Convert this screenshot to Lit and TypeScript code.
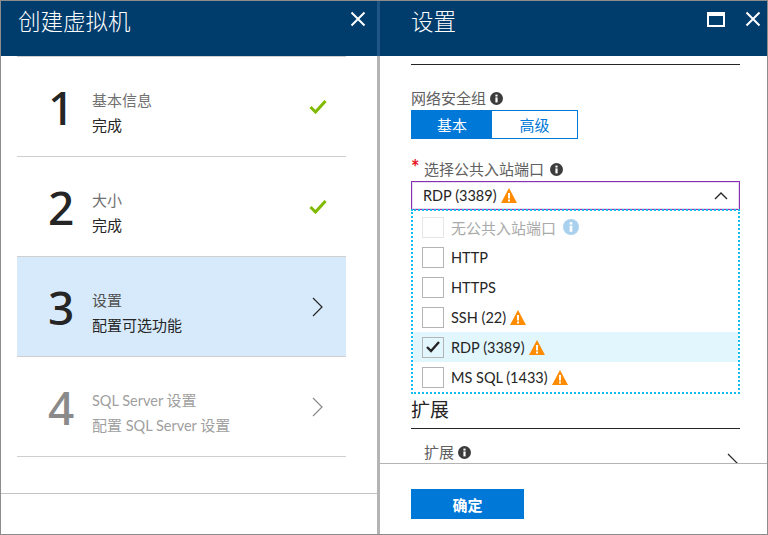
import { LitElement, html, css, svg } from "lit";
import { customElement } from "lit/decorators.js";
import { classMap } from "lit/directives/class-map.js";

interface Step {
  num: number;
  title: string;
  sub: string;
  icon: "check" | "chevron";
  active?: boolean;
  disabled?: boolean;
}

interface Port {
  label: string;
  warn?: boolean;
  checked?: boolean;
  disabled?: boolean;
}

const steps: Step[] = [
  { num: 1, title: "基本信息", sub: "完成", icon: "check" },
  { num: 2, title: "大小", sub: "完成", icon: "check" },
  { num: 3, title: "设置", sub: "配置可选功能", icon: "chevron", active: true },
  { num: 4, title: "SQL Server 设置", sub: "配置 SQL Server 设置", icon: "chevron", disabled: true },
];

const ports: Port[] = [
  { label: "无公共入站端口", disabled: true },
  { label: "HTTP" },
  { label: "HTTPS" },
  { label: "SSH (22)", warn: true },
  { label: "RDP (3389)", warn: true, checked: true },
  { label: "MS SQL (1433)", warn: true },
];

// the CJK runs are set a little larger than the latin ones
const mixed = (text: string) =>
  text
    .split(/([\u4e00-\u9fff]+)/)
    .map((part, i) => (i % 2 ? html`<span class="cjk">${part}</span>` : part));

const closeIcon = html`<svg width="16" height="16" viewBox="0 0 16 16">
  <path d="M1.5 1.5L14.5 14.5M14.5 1.5L1.5 14.5" stroke="#fff" stroke-width="2" fill="none" />
</svg>`;

const infoIcon = (color = "#3c3c3c", size = 13) => html`<svg width=${size} height=${size} viewBox="0 0 13 13">
  <circle cx="6.5" cy="6.5" r="6.5" fill=${color} />
  <rect x="5.4" y="5.4" width="2.2" height="5" fill="#fff" />
  <rect x="5.4" y="2.6" width="2.2" height="1.9" fill="#fff" />
</svg>`;

const warnIcon = svg`<svg width="16" height="15" viewBox="0 0 16 15">
  <path d="M8 0L16 15H0Z" fill="#ff8c00" />
  <rect x="7" y="5" width="2" height="5.5" fill="#fff" />
  <rect x="7" y="11.5" width="2" height="2" fill="#fff" />
</svg>`;

const checkIcon = html`<svg class="tick" width="18" height="15" viewBox="0 0 18 15">
  <path d="M1.5 8L6.5 13L16.5 2" stroke="#7fba00" stroke-width="3" fill="none" />
</svg>`;

const chevron = (color: string) => html`<svg class="chevron" width="11" height="20" viewBox="0 0 11 20">
  <path d="M1 1L10 10L1 19" stroke=${color} stroke-width="1.2" fill="none" />
</svg>`;

@customElement("app-root")
export class AppRoot extends LitElement {
  static styles = css`
    :host {
      display: grid;
      grid-template-columns: 380px 388px;
      width: 768px;
      height: 535px;
      overflow: hidden;
      background: #fff;
      box-sizing: border-box;
      font-family: "Lato", "Noto Sans CJK SC", sans-serif;
      font-size: 14.5px;
      color: #252525;
    }
    * {
      box-sizing: border-box;
    }
    .cjk {
      font-family: "Noto Sans CJK SC", sans-serif;
      font-size: 15px;
    }
    .blade {
      display: flex;
      flex-direction: column;
      height: 535px;
      border-top: 1px solid #8c8c8c;
      border-bottom: 1px solid #8c8c8c;
      min-width: 0;
    }
    .blade.left {
      border-left: 1px solid #8c8c8c;
    }
    .blade.right {
      border-right: 1px solid #8c8c8c;
    }
    .head {
      flex: none;
      height: 55px;
      background: #003c6c;
      color: #fff;
      display: flex;
      align-items: flex-start;
      justify-content: space-between;
    }
    .left .head {
      padding: 4px 11px 0 17px;
      border-right: 3px solid #1f5585;
    }
    .right .head {
      padding: 4px 6px 0 31px;
    }
    .head h1 {
      margin: 0;
      font-family: "Noto Sans CJK SC", sans-serif;
      font-size: 22.5px;
      font-weight: 300;
      line-height: 30px;
    }
    .head .actions {
      display: flex;
      align-items: center;
      gap: 20px;
      padding-top: 6px;
    }
    .head svg {
      display: block;
    }
    .left-body {
      flex: 1;
      display: flex;
      flex-direction: column;
      min-height: 0;
      border-right: 3px solid #b4b4b4;
    }
    .steps {
      flex: 1;
      padding: 0 31px 0 16px;
    }
    .step {
      height: 100px;
      border-top: 1px solid #cfcfcf;
      display: flex;
      align-items: center;
    }
    .step:last-child {
      border-bottom: 1px solid #cfcfcf;
      height: 101px;
    }
    .step.active {
      background: #d7eafc;
    }
    .step .num {
      width: 75px;
      padding-left: 31px;
      font-family: "Noto Sans", sans-serif;
      font-size: 46px;
      font-weight: 500;
      line-height: 50px;
    }
    .step .text {
      flex: 1;
      padding-top: 12px;
    }
    .step .title {
      color: #707070;
      line-height: 25px;
    }
    .step .sub {
      line-height: 24px;
    }
    .step .mark {
      width: 40px;
      display: flex;
    }
    .tick {
      margin-left: 3px;
    }
    .mark .chevron {
      margin-left: 6px;
    }
    .step.disabled .num {
      color: #8a8a8a;
    }
    .step.disabled .title,
    .step.disabled .sub {
      color: #a0a0a0;
    }
    .step.active .title {
      color: #505050;
    }
    .left-foot {
      flex: none;
      height: 41px;
      border-top: 1px solid #c4c4c4;
    }
    .body {
      flex: 1;
      min-height: 0;
      overflow: hidden;
      padding: 8px 27px 0 31px;
    }
    .rule {
      border-top: 1px solid #252525;
    }
    .label {
      display: flex;
      align-items: center;
      gap: 4px;
      color: #606060;
      line-height: 20px;
    }
    .group {
      margin-top: 23px;
    }
    .toggle {
      display: flex;
      width: 167px;
      height: 29px;
      border: 1px solid #0078d7;
      margin-top: 2px;
    }
    .toggle > span {
      display: flex;
      align-items: center;
      justify-content: center;
      color: #0078d7;
      flex: 1;
    }
    .toggle > .on {
      flex: none;
      width: 80px;
      background: #0078d7;
      color: #fff;
    }
    .ports {
      margin-top: 20px;
    }
    .ports .label {
      position: relative;
      padding-left: 13px;
      gap: 6px;
    }
    .star {
      position: absolute;
      left: 0;
      top: -2px;
      color: #e81123;
      font-size: 20px;
      font-weight: 700;
    }
    .select {
      height: 29px;
      margin-top: 2px;
      border: 1px solid #8a2fb0;
      box-shadow: inset 0 0 0 1px #e8dcf0;
      display: flex;
      align-items: center;
      gap: 4px;
      padding: 0 11px;
    }
    .select svg.up {
      margin-left: auto;
    }
    .drop {
      border: 2px dotted #12bdf0;
      height: 185px;
      margin-top: -1px;
      padding-top: 1px;
    }
    .opt {
      height: 30px;
      display: flex;
      align-items: center;
      gap: 4px;
      padding-left: 9px;
    }
    .opt.checked {
      background: #e2f6fd;
    }
    .opt.disabled {
      color: #aaa;
    }
    .box {
      flex: none;
      width: 22px;
      height: 21px;
      border: 1px solid #b4b4b4;
      margin-right: 3px;
      display: flex;
      align-items: center;
      justify-content: center;
    }
    .opt.disabled .box {
      border-color: #e6e6e6;
    }
    .hint {
      display: flex;
      margin-left: 3px;
    }
    .section {
      margin-top: 2px;
      font-family: "Noto Sans CJK SC", sans-serif;
      font-size: 19px;
      line-height: 26px;
      border-bottom: 1px solid #252525;
      padding-bottom: 6px;
    }
    .ext {
      display: flex;
      align-items: center;
      padding: 13px 0 0 13px;
      position: relative;
    }
    .ext .chev {
      position: absolute;
      right: 2px;
      top: 24px;
    }
    .foot {
      flex: none;
      height: 71px;
      border-top: 1px solid #b4b4b4;
      padding: 25px 0 0 31px;
    }
    .ok {
      width: 113px;
      height: 30px;
      background: #0078d7;
      color: #fff;
      font-weight: 700;
      display: flex;
      align-items: center;
      justify-content: center;
    }
  `;

  private renderStep(step: Step) {
    const classes = { step: true, active: !!step.active, disabled: !!step.disabled };
    return html`
      <div class=${classMap(classes)}>
        <div class="num">${step.num}</div>
        <div class="text">
          <div class="title">${mixed(step.title)}</div>
          <div class="sub">${mixed(step.sub)}</div>
        </div>
        <div class="mark">
          ${step.icon === "check" ? checkIcon : chevron(step.disabled ? "#8a8a8a" : "#252525")}
        </div>
      </div>
    `;
  }

  private renderPort(port: Port) {
    const classes = { opt: true, checked: !!port.checked, disabled: !!port.disabled };
    return html`
      <div class=${classMap(classes)}>
        <span class="box">
          ${port.checked
            ? html`<svg width="14" height="12" viewBox="0 0 14 12">
                <path d="M1 6L5 10L13 1" stroke="#252525" stroke-width="2.4" fill="none" />
              </svg>`
            : ""}
        </span>
        <span>${mixed(port.label)}</span>
        ${port.warn ? warnIcon : ""}
        ${port.disabled ? html`<span class="hint">${infoIcon("#a9d1ee", 16)}</span>` : ""}
      </div>
    `;
  }

  render() {
    return html`
      <section class="blade left">
        <div class="head">
          <h1>创建虚拟机</h1>
          <div class="actions">${closeIcon}</div>
        </div>
        <div class="left-body">
          <div class="steps">${steps.map((s) => this.renderStep(s))}</div>
          <div class="left-foot"></div>
        </div>
      </section>
      <section class="blade right">
        <div class="head">
          <h1>设置</h1>
          <div class="actions">
            <svg width="18" height="15" viewBox="0 0 18 15">
              <rect x="1" y="1" width="16" height="13" fill="none" stroke="#fff" stroke-width="2" />
              <rect x="1" y="1" width="16" height="3" fill="#fff" />
            </svg>
            ${closeIcon}
          </div>
        </div>
        <div class="body">
          <div class="rule"></div>
          <div class="group">
            <div class="label">${mixed("网络安全组")} ${infoIcon()}</div>
            <div class="toggle"><span class="on">${mixed("基本")}</span><span>${mixed("高级")}</span></div>
          </div>
          <div class="ports">
            <div class="label"><span class="star">*</span>${mixed("选择公共入站端口")} ${infoIcon()}</div>
            <div class="select">
              <span>RDP (3389)</span>
              ${warnIcon}
              <svg class="up" width="14" height="8" viewBox="0 0 14 8">
                <path d="M1 7L7 1L13 7" stroke="#252525" stroke-width="1.4" fill="none" />
              </svg>
            </div>
            <div class="drop">${ports.map((p) => this.renderPort(p))}</div>
          </div>
          <div class="section">扩展</div>
          <div class="ext">
            <div class="label">${mixed("扩展")} ${infoIcon()}</div>
            <span class="chev">${chevron("#252525")}</span>
          </div>
        </div>
        <div class="foot"><div class="ok">${mixed("确定")}</div></div>
      </section>
    `;
  }
}
